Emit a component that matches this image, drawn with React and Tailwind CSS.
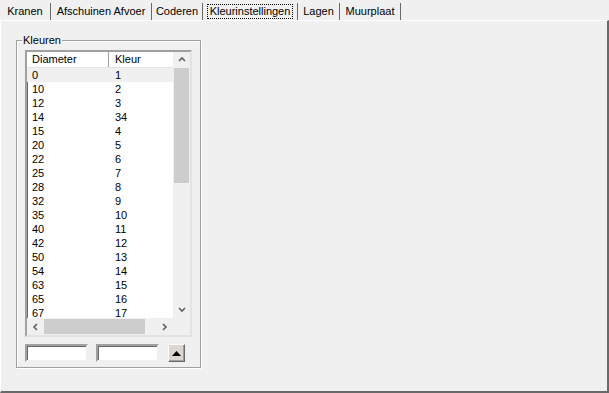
import React from 'react';

const tabs = [
  { label: 'Kranen', w: 'w-[51px]' },
  { label: 'Afschuinen Afvoer', w: 'w-[101px]' },
  { label: 'Coderen', w: 'w-[51px]' },
  { label: 'Kleurinstellingen', w: 'w-[95px]', active: true },
  { label: 'Lagen', w: 'w-[42px]' },
  { label: 'Muurplaat', w: 'w-[61px]' },
];

const rows = [
  ['0', '1'], ['10', '2'], ['12', '3'], ['14', '34'], ['15', '4'], ['20', '5'],
  ['22', '6'], ['25', '7'], ['28', '8'], ['32', '9'], ['35', '10'], ['40', '11'],
  ['42', '12'], ['50', '13'], ['54', '14'], ['63', '15'], ['65', '16'], ['67', '17'],
];

const Chevron = ({ dir }) => {
  const paths = {
    up: 'M1 5 L4 2 L7 5',
    down: 'M1 2 L4 5 L7 2',
    left: 'M5 1 L2 4 L5 7',
    right: 'M2 1 L5 4 L2 7',
  };
  return (
    <svg width="8" height="8" viewBox="0 0 8 8">
      <path d={paths[dir]} fill="none" stroke="#606060" strokeWidth="1.6" />
    </svg>
  );
};

export default function App() {
  return (
    <div className="w-[609px] h-[393px] bg-[#f0f0f0] text-[11px] leading-none text-black overflow-hidden" style={{ fontFamily: '"Liberation Sans", Arial, sans-serif' }}>
      {/* tabs */}
      <div className="h-[20px] flex items-end pl-[0px]">
        {tabs.map(t => (
          <div key={t.label} className={`${t.w} h-[17px] flex items-center justify-center border-r border-r-[#696969]`}>
            {t.active ? (
              <span className="px-[2px] h-[15px] flex items-center border border-dotted border-black">{t.label}</span>
            ) : (
              <span>{t.label}</span>
            )}
          </div>
        ))}
      </div>

      {/* page */}
      <div className="h-[373px] border-t border-l border-t-white border-l-white border-r-2 border-b-2 border-r-[#696969] border-b-[#696969] pl-[15px] pt-[19px]">
        {/* group box */}
        <div className="relative w-[185px] h-[328px] border border-[#a0a0a0] shadow-[inset_1px_1px_0_#fff,1px_1px_0_#fff] pl-[8px] pt-[9px]">
          <span className="absolute left-[5px] top-[-6px] bg-[#f0f0f0] px-[1px]">Kleuren</span>

          {/* list view */}
          <div className="w-[167px] h-[287px] border-2 border-t-[#a0a0a0] border-l-[#a0a0a0] border-r-[#e3e3e3] border-b-[#e3e3e3] shadow-[inset_1px_1px_0_#696969] bg-white flex flex-col">
            <div className="flex flex-1 min-h-0">
              <div className="flex-1 flex flex-col overflow-hidden">
                <div className="h-[16px] flex shrink-0 bg-white border-b border-[#e5e5e5]">
                  <div className="w-[82px] pl-[5px] flex items-center border-r border-[#a0a0a0]">Diameter</div>
                  <div className="flex-1 pl-[6px] flex items-center">Kleur</div>
                </div>
                {rows.map((r, i) => (
                  <div key={r[0]} className={`h-[14px] shrink-0 flex items-center ${i === 0 ? 'bg-[#f0f0f0]' : ''}`}>
                    <div className="w-[83px] pl-[5px]">{r[0]}</div>
                    <div className="pl-[5px]">{r[1]}</div>
                  </div>
                ))}
              </div>
              {/* vertical scrollbar */}
              <div className="w-[17px] flex flex-col bg-[#f0f0f0]">
                <div className="h-[16px] flex items-center justify-center"><Chevron dir="up" /></div>
                <div className="h-[115px] mx-[1px] bg-[#cdcdcd]" />
                <div className="flex-1" />
                <div className="h-[17px] flex items-center justify-center"><Chevron dir="down" /></div>
              </div>
            </div>
            {/* horizontal scrollbar */}
            <div className="h-[17px] flex shrink-0 bg-[#f0f0f0]">
              <div className="w-[17px] flex items-center justify-center"><Chevron dir="left" /></div>
              <div className="w-[101px] my-[1px] bg-[#cdcdcd]" />
              <div className="flex-1" />
              <div className="w-[17px] flex items-center justify-center"><Chevron dir="right" /></div>
              <div className="w-[17px]" />
            </div>
          </div>

          {/* inputs */}
          <div className="flex items-center mt-[7px]">
            <div className="w-[63px] h-[18px] bg-white border-2 border-t-[#a0a0a0] border-l-[#a0a0a0] border-r-[#f0f0f0] border-b-[#f0f0f0] shadow-[inset_1px_1px_0_#696969]" />
            <div className="w-[63px] h-[18px] ml-[8px] bg-white border-2 border-t-[#a0a0a0] border-l-[#a0a0a0] border-r-[#f0f0f0] border-b-[#f0f0f0] shadow-[inset_1px_1px_0_#696969]" />
            <div className="w-[17px] h-[18px] ml-[9px] bg-[#dcd6cf] border border-t-white border-l-white border-r-[#696969] border-b-[#696969] shadow-[inset_-1px_-1px_0_#a0a0a0] flex items-center justify-center">
              <svg width="9" height="5" viewBox="0 0 9 5"><path d="M0 5 L4.5 0 L9 5 Z" fill="black" /></svg>
            </div>
          </div>
        </div>
      </div>
    </div>
  );
}
